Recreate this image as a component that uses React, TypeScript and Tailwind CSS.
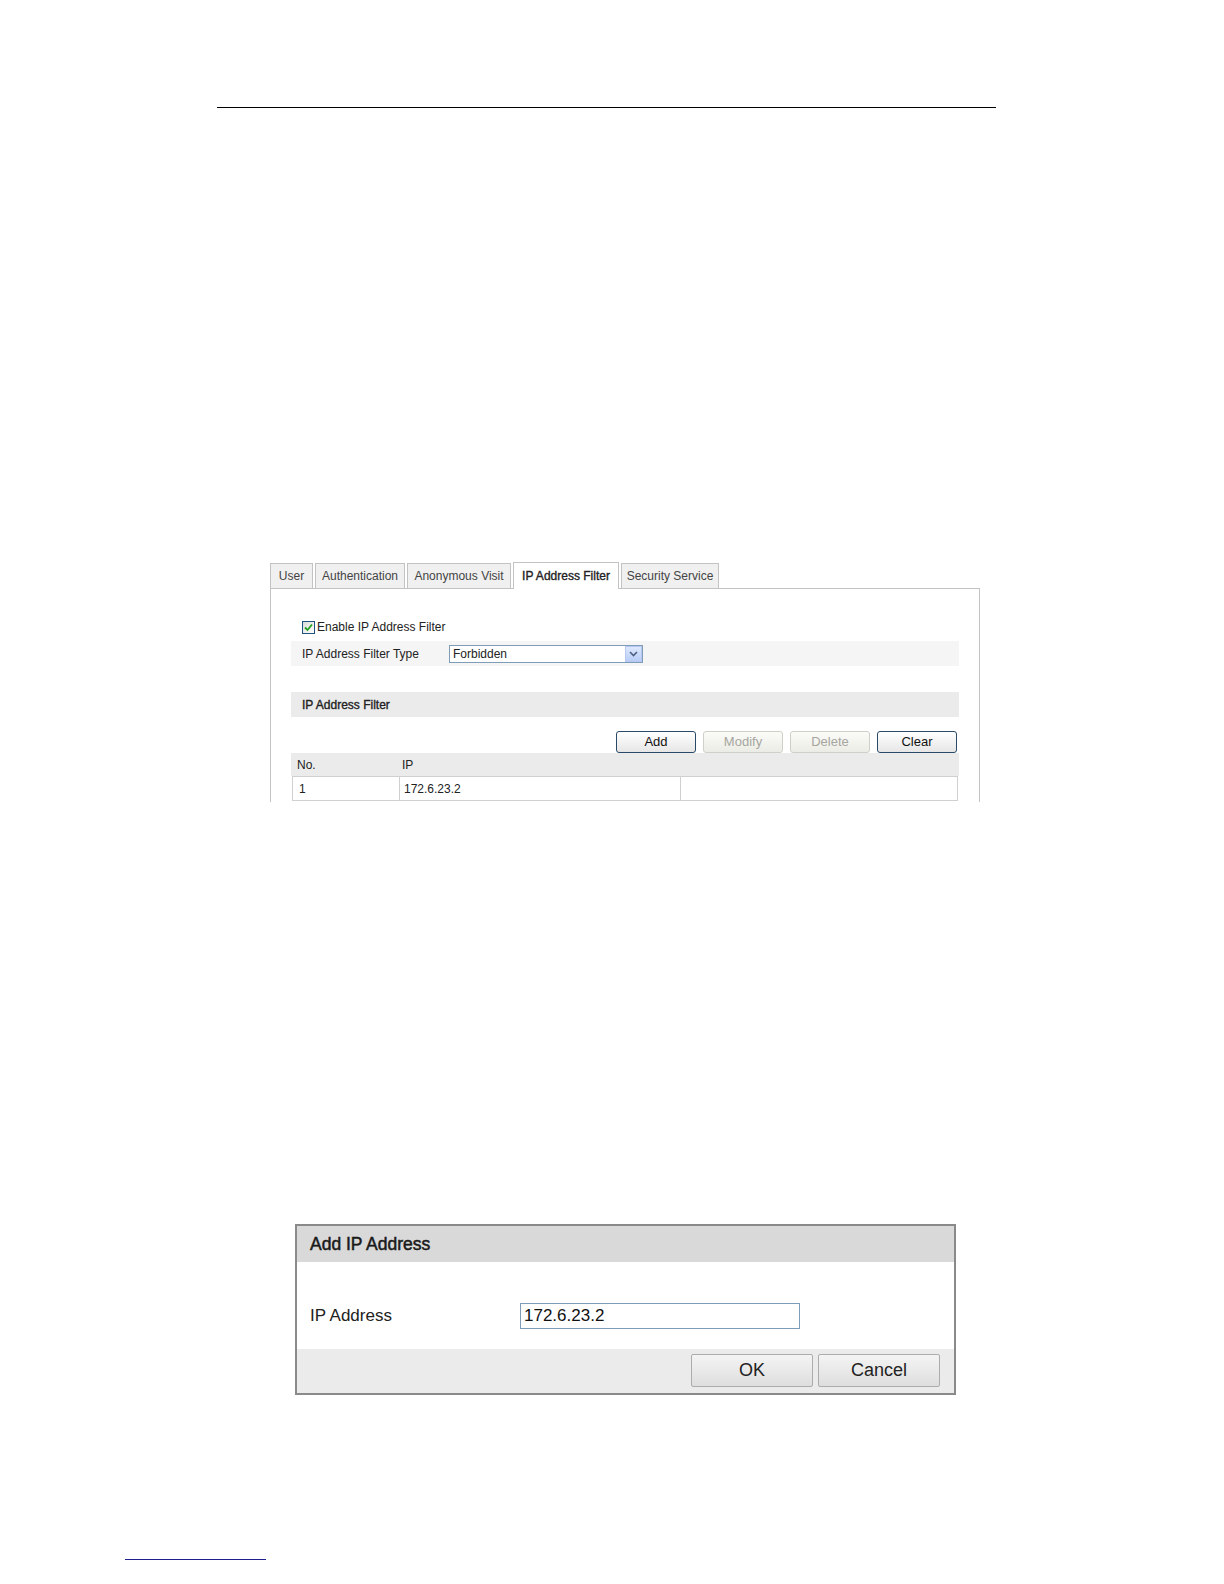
import React from 'react';

const tabs = ['User', 'Authentication', 'Anonymous Visit', 'IP Address Filter', 'Security Service'];
const tabWidths = ['w-[43px]', 'w-[90px]', 'w-[104px]', 'w-[106px]', 'w-[98px]'];

function Tabs() {
  return (
    <div className="flex items-end gap-[2px] h-[27px]">
      {tabs.map((t, i) => {
        const active = t === 'IP Address Filter';
        return (
          <div
            key={t}
            className={
              active
                ? `${tabWidths[i]} h-[27px] -mb-px z-10 bg-white border border-b-0 border-[#c3c3c3] flex items-center justify-center text-[12px] text-[#222] [-webkit-text-stroke:0.35px_#222]`
                : `${tabWidths[i]} h-[25px] bg-[#f0f0f0] border border-b-0 border-[#c3c3c3] flex items-center justify-center text-[12px] text-[#444]`
            }
          >
            {t}
          </div>
        );
      })}
    </div>
  );
}

function Checkbox() {
  return (
    <span className="w-[13px] h-[13px] border border-[#1d5281] bg-gradient-to-br from-[#dcdcd7] to-white flex items-center justify-center">
      <svg width="9" height="9" viewBox="0 0 9 9">
        <path d="M1 4.5 L3.5 7 L8 1.5" fill="none" stroke="#21a121" strokeWidth="1.8" />
      </svg>
    </span>
  );
}

function Btn({ label, disabled }: { label: string; disabled?: boolean }) {
  return (
    <div
      className={
        disabled
          ? 'w-[80px] h-[22px] rounded-[3px] border border-[#cfd0c8] bg-gradient-to-b from-[#fbfbf8] to-[#ecece6] flex items-center justify-center text-[13px] text-[#a6a69f]'
          : 'w-[80px] h-[22px] rounded-[3px] border border-[#2b4a6a] bg-gradient-to-b from-white to-[#e6e6e6] flex items-center justify-center text-[13px] text-[#111]'
      }
    >
      {label}
    </div>
  );
}

function FilterPanel() {
  return (
    <div className="ml-[270px] w-[710px]">
      <Tabs />
      <div className="h-[214px] border border-b-0 border-[#c3c3c3] px-[20px] pt-[25px]">
        <div className="h-[26px] flex items-center gap-[2px] pl-[11px] text-[12px] text-[#222]">
          <Checkbox />
          <span>Enable IP Address Filter</span>
        </div>
        <div className="mt-px h-[25px] bg-[#f5f5f5] flex items-center pl-[11px] text-[12px] text-[#222]">
          <span className="w-[147px]">IP Address Filter Type</span>
          <div className="w-[194px] h-[18px] border border-[#7f9db9] bg-white flex items-center">
            <span className="flex-1 pl-[3px] text-[12px]">Forbidden</span>
            <span className="w-[17px] h-[16px] bg-gradient-to-b from-[#dde8fd] to-[#b8cdf7] border border-[#b6c8ef] flex items-center justify-center">
              <svg width="9" height="6" viewBox="0 0 9 6">
                <path d="M1 1 L4.5 4.5 L8 1" fill="none" stroke="#4d6185" strokeWidth="1.6" />
              </svg>
            </span>
          </div>
        </div>
        <div className="mt-[26px] h-[25px] bg-[#ebebeb] flex items-center pl-[11px] text-[12px] text-[#222] [-webkit-text-stroke:0.35px_#222]">
          IP Address Filter
        </div>
        <div className="mt-[14px] h-[22px] flex justify-end gap-[7px] pr-[2px]">
          <Btn label="Add" />
          <Btn label="Modify" disabled />
          <Btn label="Delete" disabled />
          <Btn label="Clear" />
        </div>
        <div className="h-[23px] bg-[#ebebeb] flex items-center text-[12px] text-[#222]">
          <span className="w-[111px] pl-[6px]">No.</span>
          <span>IP</span>
        </div>
        <div className="h-[25px] border border-[#d0d0d0] flex text-[12px] text-[#222] mx-px">
          <span className="w-[107px] pl-[6px] flex items-center border-r border-[#d0d0d0]">1</span>
          <span className="w-[281px] pl-[4px] flex items-center border-r border-[#d0d0d0]">172.6.23.2</span>
          <span className="flex-1" />
        </div>
      </div>
    </div>
  );
}

function DialogBtn({ label }: { label: string }) {
  return (
    <div className="w-[122px] h-[33px] rounded-[2px] border border-[#acacac] bg-gradient-to-b from-[#f4f4f4] to-[#dedede] flex items-center justify-center text-[18px] text-[#222]">
      {label}
    </div>
  );
}

function AddDialog() {
  return (
    <div className="ml-[295px] w-[661px] h-[171px] border-2 border-[#8a8a8a] flex flex-col">
      <div className="h-[36px] bg-[#d9d9d9] flex items-center pl-[13px] text-[17.5px] text-[#1a1a1a] [-webkit-text-stroke:0.5px_#1a1a1a]">
        Add IP Address
      </div>
      <div className="h-[87px] bg-white flex items-center pl-[13px] pt-[20px]">
        <span className="w-[210px] text-[17px] text-[#222]">IP Address</span>
        <div className="w-[280px] h-[26px] border border-[#7f9db9] flex items-center pl-[3px] text-[17px] text-[#111]">
          172.6.23.2
        </div>
      </div>
      <div className="flex-1 bg-[#ebebeb] flex justify-end items-start gap-[5px] pt-[5px] pr-[14px]">
        <DialogBtn label="OK" />
        <DialogBtn label="Cancel" />
      </div>
    </div>
  );
}

export default function App() {
  return (
    <div className="w-full bg-white pt-[107px] pb-[10px] font-['Liberation_Sans',Arial,sans-serif]">
      <div className="ml-[217px] w-[779px] h-[1px] bg-black" />
      <div className="mt-[453px]">
        <FilterPanel />
      </div>
      <div className="mt-[422px]">
        <AddDialog />
      </div>
      <div className="mt-[164px] ml-[125px] w-[141px] h-px bg-[#1f1f8f]" />
    </div>
  );
}
